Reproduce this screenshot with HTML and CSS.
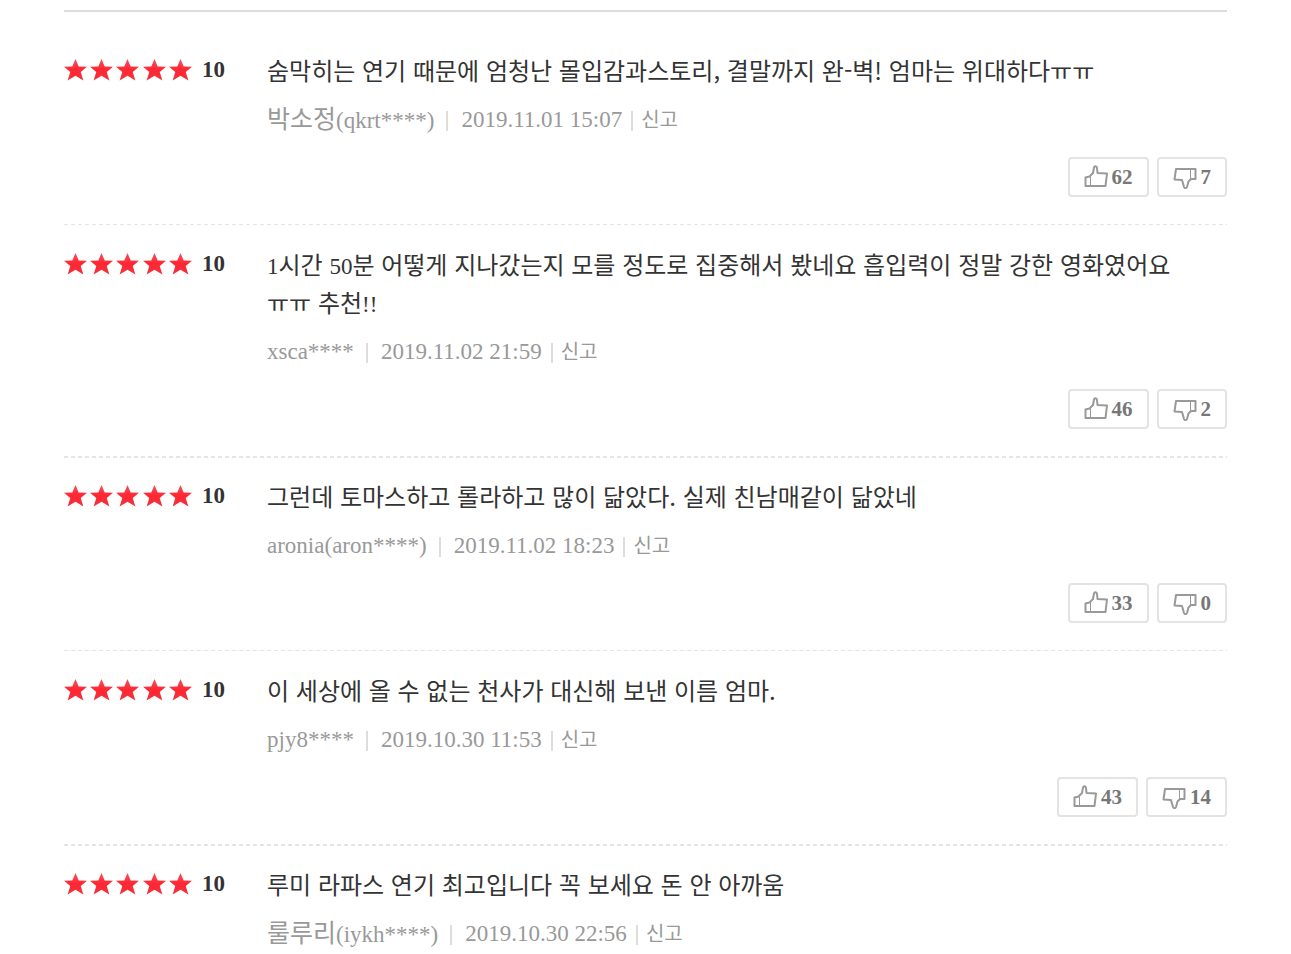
FILE: index.html
```html
<!DOCTYPE html>
<html lang="ko">
<head>
  <meta charset="UTF-8">
  <meta name="viewport" content="width=device-width, initial-scale=1.0">
  <title>관람객 평점</title>
  <link rel="stylesheet" href="styles.css">
</head>
<body>
  <!-- shared icon shapes -->
  <svg class="sprite" aria-hidden="true">
    <linearGradient id="red" x1="0" y1="0" x2="0" y2="1">
      <stop offset="0" stop-color="#f4525c"/>
      <stop offset="0.5" stop-color="#ff2632"/>
      <stop offset="1" stop-color="#f0323c"/>
    </linearGradient>
    <symbol id="stars" viewBox="0 0 128 22">
      <g fill="url(#red)">
        <path id="star" d="M11.500 0l3.200 7.400 8.300.3-6.300 5.400 2.700 8.400-7.900-4.700-7.900 4.700 2.700-8.400L0 7.700l8.300-.3z"/>
        <use href="#star" x="26"/>
        <use href="#star" x="52"/>
        <use href="#star" x="79"/>
        <use href="#star" x="105"/>
      </g>
    </symbol>
    <symbol id="thumb-up" viewBox="0 0 24 24">
      <path d="M1.500 12.500l4-1 3.500-3.500 1-5.500c.5-1.700 2.700-1.500 3 .5l.5 5 9.500.5-1.500 12.500H1.500z"/>
      <path class="thin" d="M6.500 11.500V21"/>
    </symbol>
    <symbol id="thumb-down" viewBox="0 0 24 24">
      <path d="M22.500 4H3L1.500 14.500l7.500.5 2 7c.5 1.500 2.500 1.500 3 0l1.500-5.500 2.500-2.500h4.500z"/>
      <path class="thin" d="M17.500 4V14"/>
    </symbol>
  </svg>

  <ul class="reviews">
    <li class="review">
      <div class="score">
        <svg class="stars" role="img" aria-label="별점"><use href="#stars"/></svg>
        <em>10</em>
      </div>
      <div class="content">
        <p class="comment">숨막히는 연기 때문에 엄청난 몰입감과스토리, 결말까지 완-벽! 엄마는 위대하다ㅠㅠ</p>
        <div class="meta">
          <span class="user"><span class="name">박소정</span>(qkrt****)</span>
          <span class="date">2019.11.01 15:07</span>
          <a class="report" href="#">신고</a>
        </div>
        <div class="votes">
          <button type="button"><svg><use href="#thumb-up"/></svg>62</button>
          <button type="button"><svg><use href="#thumb-down"/></svg>7</button>
        </div>
      </div>
    </li>
    <li class="review">
      <div class="score">
        <svg class="stars" role="img" aria-label="별점"><use href="#stars"/></svg>
        <em>10</em>
      </div>
      <div class="content">
        <p class="comment"><span class="latin">1</span>시간 <span class="latin">50</span>분 어떻게 지나갔는지 모를 정도로 집중해서 봤네요 흡입력이 정말 강한 영화였어요 ㅠㅠ 추천<span class="latin">!!</span></p>
        <div class="meta">
          <span class="user">xsca****</span>
          <span class="date">2019.11.02 21:59</span>
          <a class="report" href="#">신고</a>
        </div>
        <div class="votes">
          <button type="button"><svg><use href="#thumb-up"/></svg>46</button>
          <button type="button"><svg><use href="#thumb-down"/></svg>2</button>
        </div>
      </div>
    </li>
    <li class="review">
      <div class="score">
        <svg class="stars" role="img" aria-label="별점"><use href="#stars"/></svg>
        <em>10</em>
      </div>
      <div class="content">
        <p class="comment">그런데 토마스하고 롤라하고 많이 닮았다. 실제 친남매같이 닮았네</p>
        <div class="meta">
          <span class="user">aronia(aron****)</span>
          <span class="date">2019.11.02 18:23</span>
          <a class="report" href="#">신고</a>
        </div>
        <div class="votes">
          <button type="button"><svg><use href="#thumb-up"/></svg>33</button>
          <button type="button"><svg><use href="#thumb-down"/></svg>0</button>
        </div>
      </div>
    </li>
    <li class="review">
      <div class="score">
        <svg class="stars" role="img" aria-label="별점"><use href="#stars"/></svg>
        <em>10</em>
      </div>
      <div class="content">
        <p class="comment">이 세상에 올 수 없는 천사가 대신해 보낸 이름 엄마.</p>
        <div class="meta">
          <span class="user">pjy8****</span>
          <span class="date">2019.10.30 11:53</span>
          <a class="report" href="#">신고</a>
        </div>
        <div class="votes">
          <button type="button"><svg><use href="#thumb-up"/></svg>43</button>
          <button type="button"><svg><use href="#thumb-down"/></svg>14</button>
        </div>
      </div>
    </li>
    <li class="review">
      <div class="score">
        <svg class="stars" role="img" aria-label="별점"><use href="#stars"/></svg>
        <em>10</em>
      </div>
      <div class="content">
        <p class="comment">루미 라파스 연기 최고입니다 꼭 보세요 돈 안 아까움</p>
        <div class="meta">
          <span class="user"><span class="name">룰루리</span>(iykh****)</span>
          <span class="date">2019.10.30 22:56</span>
          <a class="report" href="#">신고</a>
        </div>
      </div>
    </li>
  </ul>
</body>
</html>
```
FILE: styles.css
```css
* {
  box-sizing: border-box;
  margin: 0;
  padding: 0;
}

body {
  padding: 10px 64px 0;
  background-color: #fff;
  color: #333;
  font-family: "Liberation Serif", "Noto Sans CJK KR", serif;
  font-size: 23px;
  line-height: 38px;
}

.sprite {
  position: absolute;
  width: 0;
  height: 0;
}

.reviews {
  padding-top: 20px;
  border-top: 2px solid #ddd;
  list-style: none;
}

/* dashed divider, drawn as a background to control the dash length */
.review {
  display: flex;
  padding: 19px 0 29px;
  background: repeating-linear-gradient(to right, #e5e5e5 0 4px, transparent 4px 7px) 0 100% / 100% 2px no-repeat;
}

/* every other divider is a hairline */
.review:nth-child(odd) {
  background-position: 0 calc(100% - 1px);
  background-size: 100% 1px;
}

.review:last-child {
  padding-bottom: 0;
  background: none;
}

.score {
  display: flex;
  align-items: center;
  gap: 10px;
  flex: 0 0 203px;
  height: 38px;
}

.score em {
  font-style: normal;
  font-weight: bold;
}

.stars {
  width: 128px;
  height: 22px;
}

.content {
  flex: 1;
  min-width: 0;
}

.comment {
  padding-right: 16px;
  font-family: "Noto Sans CJK KR", sans-serif;
  font-size: 24px;
  word-break: keep-all;
}

.latin {
  font-family: "Liberation Serif", serif;
  font-size: 23px;
  line-height: 1;
}

.meta {
  display: flex;
  align-items: center;
  height: 38px;
  margin-top: 12px;
  color: #999;
}

.name {
  font-size: 25px;
}

.date {
  margin-left: 12px;
}

.date::before,
.report::before {
  content: "";
  display: inline-block;
  width: 2px;
  height: 20px;
  background-color: #ddd;
  vertical-align: -4px;
}

.date::before {
  margin-right: 13px;
}

.report {
  margin-left: 9px;
  color: #999;
  font-size: 20px;
  text-decoration: none;
}

.report::before {
  margin-right: 8px;
}

.votes {
  display: flex;
  justify-content: flex-end;
  gap: 8px;
  margin-top: 18px;
}

button {
  display: flex;
  align-items: center;
  gap: 4px;
  height: 40px;
  padding: 0 14px;
  border: 2px solid #e3e3e3;
  border-radius: 4px;
  background-color: #fff;
  color: #777;
  font-family: inherit;
  font-size: 21px;
  font-weight: bold;
  cursor: pointer;
}

button svg {
  width: 24px;
  height: 24px;
  fill: none;
  stroke: #999;
  stroke-width: 2;
  stroke-linejoin: round;
}

.thin {
  stroke: #999;
  stroke-width: 1;
}
```
